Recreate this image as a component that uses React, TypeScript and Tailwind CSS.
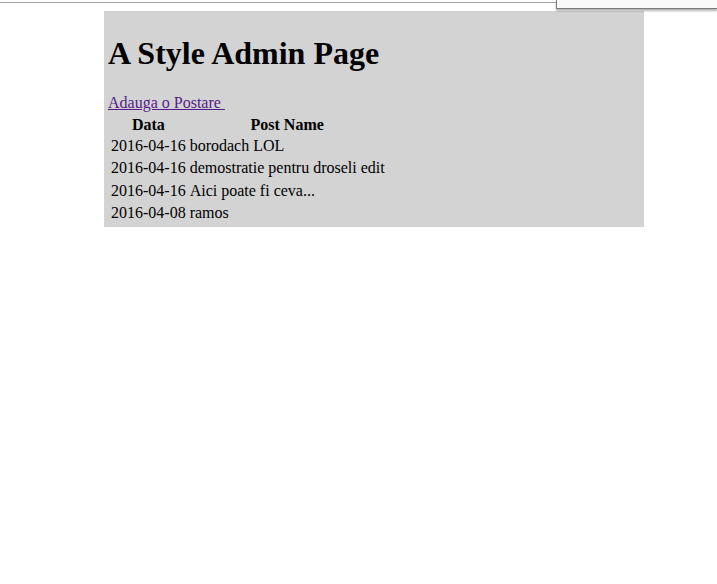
import React from "react";

const rows = [
  ["2016-04-16", "borodach LOL"],
  ["2016-04-16", "demostratie pentru droseli edit"],
  ["2016-04-16", "Aici poate fi ceva..."],
  ["2016-04-08", "ramos"],
];

export default function App() {
  return (
    <div className="relative min-h-[584px] bg-white text-black" style={{ fontFamily: '"Liberation Serif", "Times New Roman", serif' }}>
      <div className="absolute left-0 top-[2px] h-px w-[556px] bg-[#a0a0a0]" />
      <div className="absolute left-[556px] top-0 h-[9px] w-[161px] border-b border-l border-[#7a7a7a] bg-[#fafafa] shadow-[0_2px_2px_rgba(0,0,0,0.3)]" />
      <div className="h-[11px]" />
      <div className="ml-[104px] w-[540px] bg-[#d3d3d3] px-[4px] pb-[1px] pt-[24px]">
        <h1 className="m-0 text-[32px] font-bold leading-[37px]">A Style Admin Page</h1>
        <div className="mt-[22px] text-[16px] leading-[18px]">
          <a href="#" className="text-[#551a8b] underline">Adauga o Postare&nbsp;</a>
        </div>
        <table className="border-separate border-spacing-[2px] text-[16px]">
          <thead>
            <tr>
              <th className="px-[1px] pb-0 pt-[2px] text-center font-bold leading-[18px]">Data</th>
              <th className="px-[1px] pb-0 pt-[2px] text-center font-bold leading-[18px]">Post Name</th>
            </tr>
          </thead>
          <tbody>
            {rows.map((r, i) => (
              <tr key={i}>
                <td className="p-[1px] leading-[18.4px]">{r[0]}</td>
                <td className="p-[1px] leading-[18.4px]">{r[1]}</td>
              </tr>
            ))}
          </tbody>
        </table>
      </div>
    </div>
  );
}
